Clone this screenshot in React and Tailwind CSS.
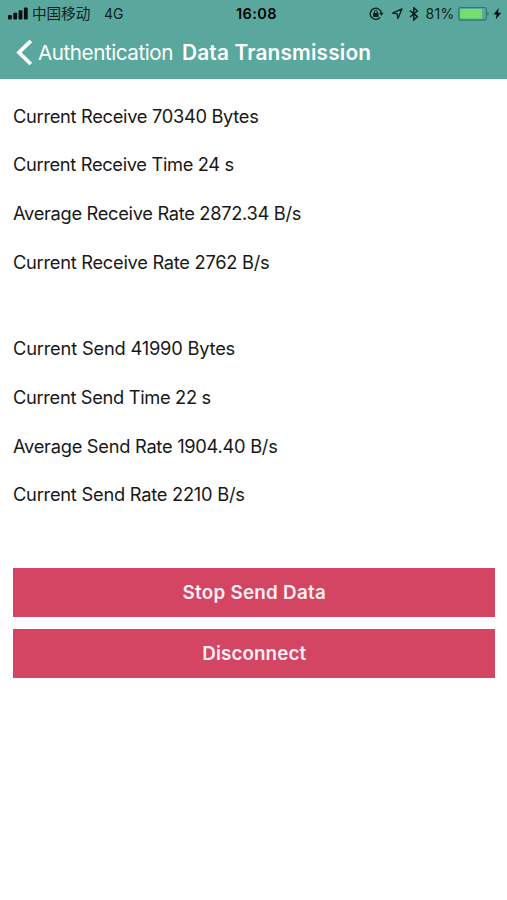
import React from "react";

const receiveStats = [
  { text: "Current Receive 70340 Bytes", track: "tracking-[-0.31px]" },
  { text: "Current Receive Time 24 s", track: "tracking-[-0.34px]" },
  { text: "Average Receive Rate 2872.34 B/s", track: "tracking-[-0.32px]" },
  { text: "Current Receive Rate 2762 B/s", track: "tracking-[-0.28px]" },
];

const sendStats = [
  { text: "Current Send 41990 Bytes", track: "tracking-[-0.2px]" },
  { text: "Current Send Time 22 s", track: "tracking-[-0.33px]" },
  { text: "Average Send Rate 1904.40 B/s", track: "tracking-[-0.28px]" },
  { text: "Current Send Rate 2210 B/s", track: "tracking-[-0.25px]" },
];

const actions = [
  { label: "Stop Send Data", track: "tracking-[0.28px]" },
  { label: "Disconnect", track: "tracking-[0.1px]" },
];

const StatusBar = () => (
  <div className="flex items-center justify-between h-[27px] pl-2 pr-[5px] text-[#0b1f1c]">
    {/* CARRIER */}
    <div className="flex flex-1 items-center whitespace-nowrap">
      <svg width="20" height="13" viewBox="0 0 20 13" fill="#04100e">
        <rect x="0" y="8" width="3.8" height="4.5" rx="1" />
        <rect x="5.3" y="5.8" width="3.8" height="6.7" rx="1" />
        <rect x="10.6" y="3.3" width="3.8" height="9.2" rx="1" />
        <rect x="15.9" y="0.5" width="3.8" height="12" rx="1" />
      </svg>
      <span className="ml-1 text-[14.6px] leading-none font-['Noto_Sans_CJK_SC',sans-serif]">中国移动</span>
      <span className="ml-[13.5px] text-[14px] leading-none">4G</span>
    </div>

    {/* CLOCK */}
    <span className="pt-px pl-[3px] text-[14.5px] leading-none font-semibold tracking-[0.4px] text-black">16:08</span>

    {/* INDICATORS */}
    <div className="flex flex-1 items-center justify-end whitespace-nowrap">
      <svg width="15" height="14" viewBox="0 0 15 14" fill="none" stroke="#0b1f1c">
        <path d="M11.2 10.4A5.6 5.6 0 1 1 12.4 6" strokeWidth="1.3" />
        <path d="M10.2 5.8h4.4l-2.2 3z" fill="#0b1f1c" stroke="none" />
        <rect x="4.1" y="5.9" width="5.4" height="4.2" rx="0.5" fill="#0b1f1c" stroke="none" />
        <path d="M5.4 6.2V4.9a1.4 1.4 0 0 1 2.8 0v1.3" strokeWidth="1" />
      </svg>
      <svg className="ml-[7px]" width="12" height="12" viewBox="0 0 12 12" fill="none" stroke="#0b1f1c" strokeWidth="1.3" strokeLinejoin="round">
        <path d="M11 0.9L1.6 5.2l4.7.6.6 4.7z" />
      </svg>
      <svg className="ml-[6px]" width="10" height="14" viewBox="0 0 10 14" fill="none" stroke="#0b1f1c" strokeWidth="1.5">
        <path d="M1 3.6l7.4 6L4.8 13V0.8l3.6 3.2L1 10" />
      </svg>
      <span className="ml-[7px] text-[14px] leading-none tracking-[0.3px]">81%</span>
      <svg className="ml-[3.5px]" width="31" height="14" viewBox="0 0 31 14" fill="none">
        <rect x="0.7" y="0.5" width="27.6" height="12.6" rx="2" stroke="#35756a" strokeWidth="1.1" />
        <rect x="2.2" y="2" width="21.8" height="9.6" rx="0.6" fill="#76dd6f" />
        <path d="M29.3 4.5c1.7.6 1.7 3.8 0 4.4z" fill="#35756a" />
      </svg>
      <svg className="ml-[4px]" width="9" height="12" viewBox="0 0 9 12" fill="#04100e">
        <path d="M5.8 0L0.5 6.6h3.1L2.7 11.6l5.5-6.8H5z" />
      </svg>
    </div>
  </div>
);

const StatList = ({ items }) => (
  <ul>
    {items.map((item) => (
      <li
        key={item.text}
        className={`flex items-center h-[48.8px] text-[18.3px] whitespace-nowrap ${item.track}`}
      >
        {item.text}
      </li>
    ))}
  </ul>
);

const App = () => {
  return (
    <div className="w-full h-screen overflow-hidden bg-white text-[#181818] font-['Inter',sans-serif]">
      {/* HEADER */}
      <header className="h-[79px] bg-[#5aa89d]">
        <StatusBar />
        <div className="flex items-center h-[51px] pl-4 text-white whitespace-nowrap">
          <button className="flex items-center" aria-label="Back">
            <svg width="17" height="26" viewBox="0 0 17 26" fill="none" stroke="white" strokeWidth="3.8">
              <path d="M14.8 1L3 12.5l11.8 11.5" />
            </svg>
            <span className="ml-[5px] pt-px w-[135px] text-left text-[20.6px] leading-none tracking-[-0.43px]">Authentication</span>
          </button>
          <h1 className="ml-[9px] pt-px text-[20.8px] leading-none font-semibold tracking-[0.18px]">Data Transmission</h1>
        </div>
      </header>

      {/* TRANSFER STATS */}
      <main className="pl-[13px] pr-[12.5px] pt-[13px]">
        <StatList items={receiveStats} />
        <div className="mt-[37.2px]">
          <StatList items={sendStats} />
        </div>

        {/* ACTIONS */}
        <div className="flex flex-col gap-3 mt-[48.4px]">
          {actions.map((action) => (
            <button
              key={action.label}
              className={`h-[49px] pt-[2px] pl-px bg-[#d44463] text-[#fff0f3] text-[18.8px] font-semibold ${action.track}`}
            >
              {action.label}
            </button>
          ))}
        </div>
      </main>
    </div>
  );
};

export default App;
